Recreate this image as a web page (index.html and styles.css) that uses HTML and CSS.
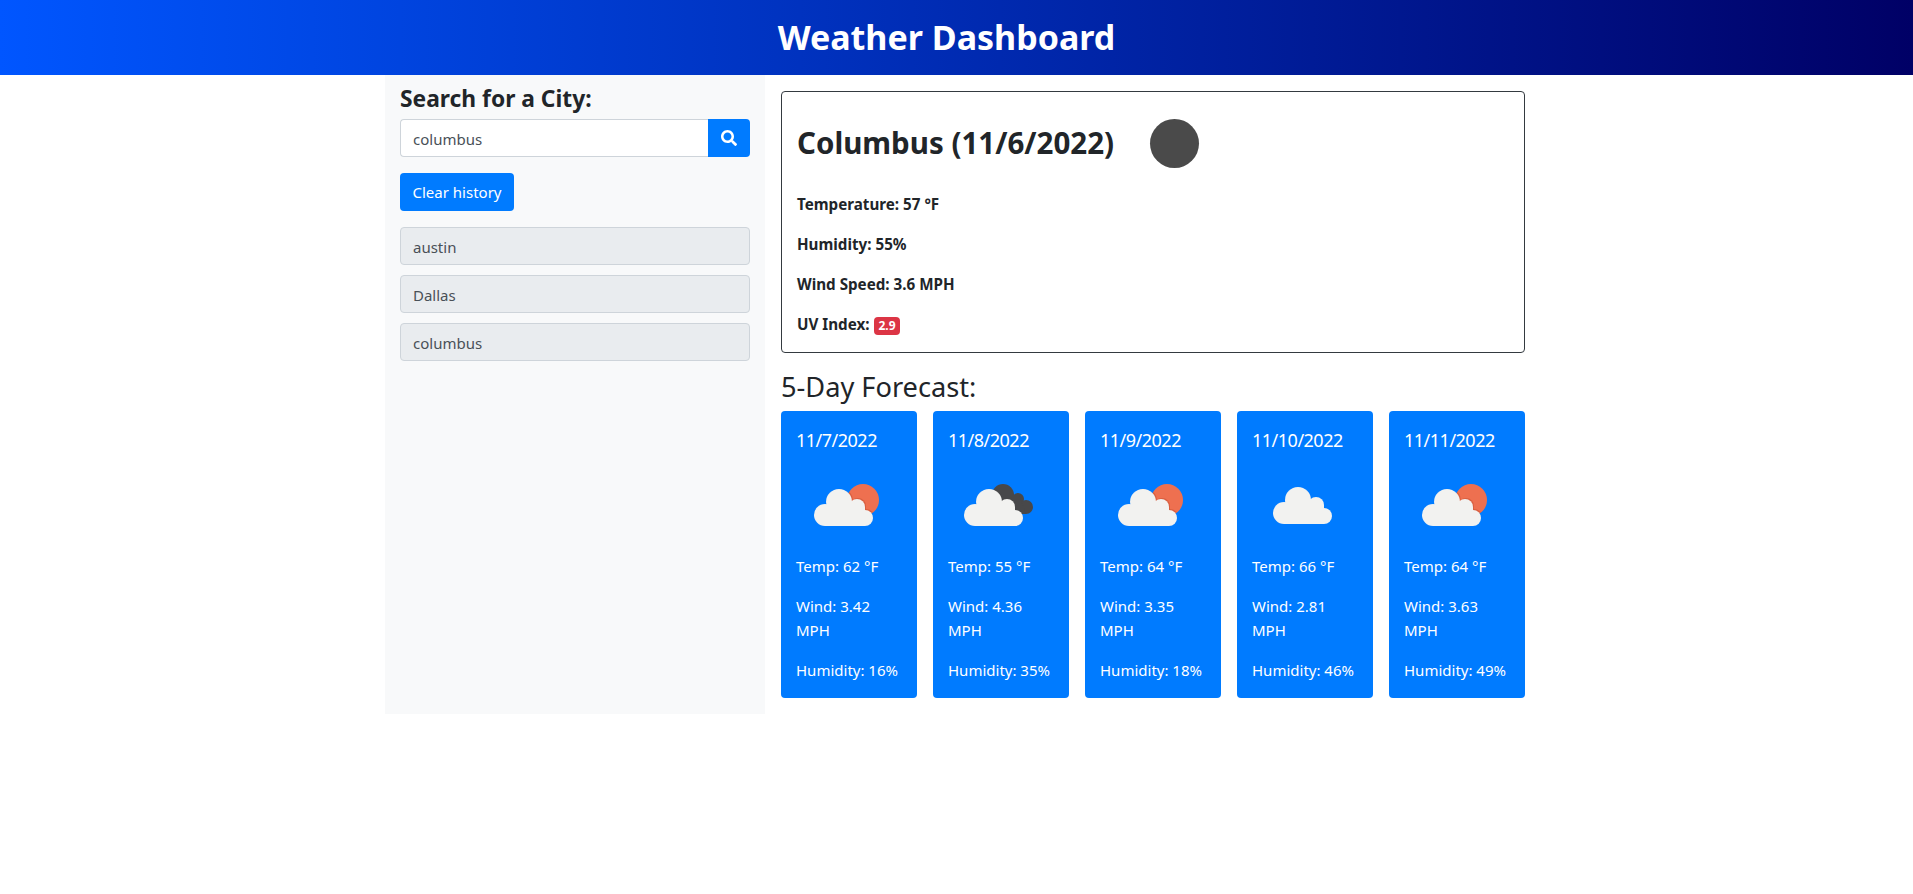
FILE: index.html
```html
<!DOCTYPE html>
<html lang="en">
<head>
    <meta charset="UTF-8">
    <meta name="viewport" content="width=device-width, initial-scale=1.0">
    <title>Weather Dashboard</title>
    <link rel="stylesheet" href="styles.css">
</head>
<body>
    <svg class="defs" width="0" height="0" aria-hidden="true">
        <defs>
            <g id="cloud">
                <circle cx="28" cy="60" r="11"/>
                <circle cx="42" cy="47" r="13"/>
                <circle cx="60" cy="52" r="8"/>
                <circle cx="68" cy="63" r="8"/>
                <rect x="28" y="52" width="40" height="19"/>
            </g>
            <clipPath id="sun-clip"><circle cx="66" cy="45" r="16"/></clipPath>
            <symbol id="icon-sun" viewBox="0 -1 100 100">
                <circle cx="66" cy="45" r="16" fill="#ee7050"/>
                <g clip-path="url(#sun-clip)"><use href="#cloud" transform="translate(1 -1)" fill="#d95f40"/></g>
                <use href="#cloud" fill="#f2f2f0"/>
            </symbol>
            <symbol id="icon-dark" viewBox="0 -1 100 100">
                <g fill="#48484a">
                    <circle cx="54" cy="40" r="11"/>
                    <circle cx="69" cy="44" r="6"/>
                    <circle cx="77" cy="52" r="7"/>
                    <polygon points="48,40 70,40 77,59 62,59"/>
                </g>
                <use href="#cloud" transform="translate(-2 0)" fill="#f2f2f0"/>
            </symbol>
            <symbol id="icon-cloud" viewBox="0 -1 100 100">
                <use href="#cloud" transform="translate(3 -2)" fill="#f2f2f0"/>
            </symbol>
        </defs>
    </svg>

    <header class="top-bar">
        <h1>Weather Dashboard</h1>
    </header>

    <div class="container">
        <aside class="sidebar">
            <h2 class="search-title">Search for a City:</h2>
            <form class="search-group">
                <input class="search-input" type="text" value="columbus">
                <button class="search-btn" type="button" aria-label="Search">
                    <svg width="16" height="16" viewBox="0 0 512 512" fill="#fff"><path d="M505 442.7L405.3 343c-4.5-4.5-10.6-7-17-7H372c27.6-35.3 44-79.7 44-128C416 93.1 322.9 0 208 0S0 93.1 0 208s93.1 208 208 208c48.3 0 92.7-16.4 128-44v16.3c0 6.4 2.5 12.5 7 17l99.7 99.7c9.4 9.4 24.6 9.4 33.9 0l28.3-28.3c9.4-9.4 9.4-24.6.1-34zM208 336c-70.7 0-128-57.2-128-128 0-70.7 57.2-128 128-128 70.7 0 128 57.2 128 128 0 70.7-57.2 128-128 128z"/></svg>
                </button>
            </form>
            <button class="clear-btn" type="button">Clear history</button>
            <ul class="history">
                <li>austin</li>
                <li>Dallas</li>
                <li>columbus</li>
            </ul>
        </aside>

        <main class="main">
            <section class="today">
                <div class="today-head">
                    <h2>Columbus (11/6/2022)</h2>
                    <span class="today-icon"></span>
                </div>
                <p>Temperature: 57 °F</p>
                <p>Humidity: 55%</p>
                <p>Wind Speed: 3.6 MPH</p>
                <p>UV Index: <span class="badge">2.9</span></p>
            </section>

            <h3 class="forecast-title">5-Day Forecast:</h3>
            <div class="forecast">
                <div class="day">
                    <h5>11/7/2022</h5>
                    <svg class="day-icon"><use href="#icon-sun"/></svg>
                    <p>Temp: 62 °F</p>
                    <p>Wind: 3.42 MPH</p>
                    <p>Humidity: 16%</p>
                </div>
                <div class="day">
                    <h5>11/8/2022</h5>
                    <svg class="day-icon"><use href="#icon-dark"/></svg>
                    <p>Temp: 55 °F</p>
                    <p>Wind: 4.36 MPH</p>
                    <p>Humidity: 35%</p>
                </div>
                <div class="day">
                    <h5>11/9/2022</h5>
                    <svg class="day-icon"><use href="#icon-sun"/></svg>
                    <p>Temp: 64 °F</p>
                    <p>Wind: 3.35 MPH</p>
                    <p>Humidity: 18%</p>
                </div>
                <div class="day">
                    <h5>11/10/2022</h5>
                    <svg class="day-icon"><use href="#icon-cloud"/></svg>
                    <p>Temp: 66 °F</p>
                    <p>Wind: 2.81 MPH</p>
                    <p>Humidity: 46%</p>
                </div>
                <div class="day">
                    <h5>11/11/2022</h5>
                    <svg class="day-icon"><use href="#icon-sun"/></svg>
                    <p>Temp: 64 °F</p>
                    <p>Wind: 3.63 MPH</p>
                    <p>Humidity: 49%</p>
                </div>
            </div>
        </main>
    </div>
</body>
</html>
```

FILE: styles.css
```css
body {
    font-family: "Noto Sans", "Open Sans", sans-serif;
    font-size: 15px;
    line-height: 24px;
    margin: 0;
    padding: 0;
    background-color: #fff;
    color: #212529;
}
.defs {
    position: absolute;
}
h1, h2, h3, h5, p, ul {
    margin: 0;
    padding: 0;
}
.top-bar {
    height: 75px;
    display: flex;
    align-items: center;
    justify-content: center;
    padding-right: 20px;
    padding-bottom: 2px;
    box-sizing: border-box;
    background: linear-gradient(to right, #0056ff, #000066);
}
.top-bar h1 {
    font-size: 34px;
    line-height: 40px;
    font-weight: 700;
    color: #fff;
}
.container {
    width: 1140px;
    margin-left: 385px;
    display: flex;
}
.sidebar {
    width: 380px;
    height: 639px;
    box-sizing: border-box;
    padding: 8px 15px 0;
    background-color: #f8f9fa;
}
.search-title {
    font-size: 22.8px;
    line-height: 32px;
    font-weight: 700;
    margin-bottom: 4px;
}
.search-group {
    display: flex;
    height: 38px;
}
.search-input {
    flex: 1;
    min-width: 0;
    box-sizing: border-box;
    padding: 7px 12px 5px;
    font: inherit;
    color: #495057;
    background-color: #fff;
    border: 1px solid #ced4da;
    border-right: none;
    border-radius: 4px 0 0 4px;
}
.search-btn {
    width: 42px;
    padding: 0;
    display: flex;
    align-items: center;
    justify-content: center;
    border: none;
    border-radius: 0 4px 4px 0;
    background-color: #007bff;
}
.clear-btn {
    display: block;
    height: 38px;
    width: 114px;
    margin-top: 16px;
    padding: 0;
    font: inherit;
    color: #fff;
    border: none;
    border-radius: 4px;
    background-color: #007bff;
}
.history {
    list-style: none;
    margin-top: 16px;
}
.history li {
    height: 38px;
    box-sizing: border-box;
    margin-bottom: 10px;
    padding: 7px 12px 5px;
    color: #495057;
    background-color: #e9ecef;
    border: 1px solid #ced4da;
    border-radius: 4px;
}
.main {
    width: 744px;
    margin-left: 16px;
    padding-top: 16px;
}
.today {
    height: 262px;
    box-sizing: border-box;
    padding: 26px 15px 0;
    border: 1px solid #343a40;
    border-radius: 4px;
}
.today-head {
    display: flex;
    align-items: center;
    height: 50px;
    margin-bottom: 24px;
}
.today-head h2 {
    font-size: 29.5px;
    line-height: 36px;
    font-weight: 700;
}
.today-icon {
    width: 49px;
    height: 49px;
    margin-left: 36px;
    border-radius: 50%;
    background-color: #4a4a4a;
}
.today p {
    font-size: 15.2px;
    font-weight: 700;
    margin-bottom: 16px;
}
.badge {
    display: inline-block;
    margin-left: 1px;
    padding: 0 4px;
    font-size: 12px;
    line-height: 18px;
    font-weight: 700;
    color: #fff;
    background-color: #dc3545;
    border-radius: 4px;
}
.forecast-title {
    margin-top: 18px;
    font-size: 27.2px;
    line-height: 32px;
    font-weight: 400;
    margin-bottom: 8px;
}
.forecast {
    display: flex;
    gap: 16px;
}
.day {
    width: 136px;
    height: 287px;
    box-sizing: border-box;
    padding: 16px 16px 16px 15px;
    color: #fff;
    background-color: #007bff;
    border-radius: 4px;
}
.day h5 {
    font-size: 18px;
    line-height: 26px;
    font-weight: 400;
    letter-spacing: -0.5px;
}
.day-icon {
    display: block;
    width: 100px;
    height: 100px;
    margin-top: 1px;
    margin-left: 1px;
}
.day p {
    margin-bottom: 16px;
}
.day p:last-child {
    margin-bottom: 0;
}
```
